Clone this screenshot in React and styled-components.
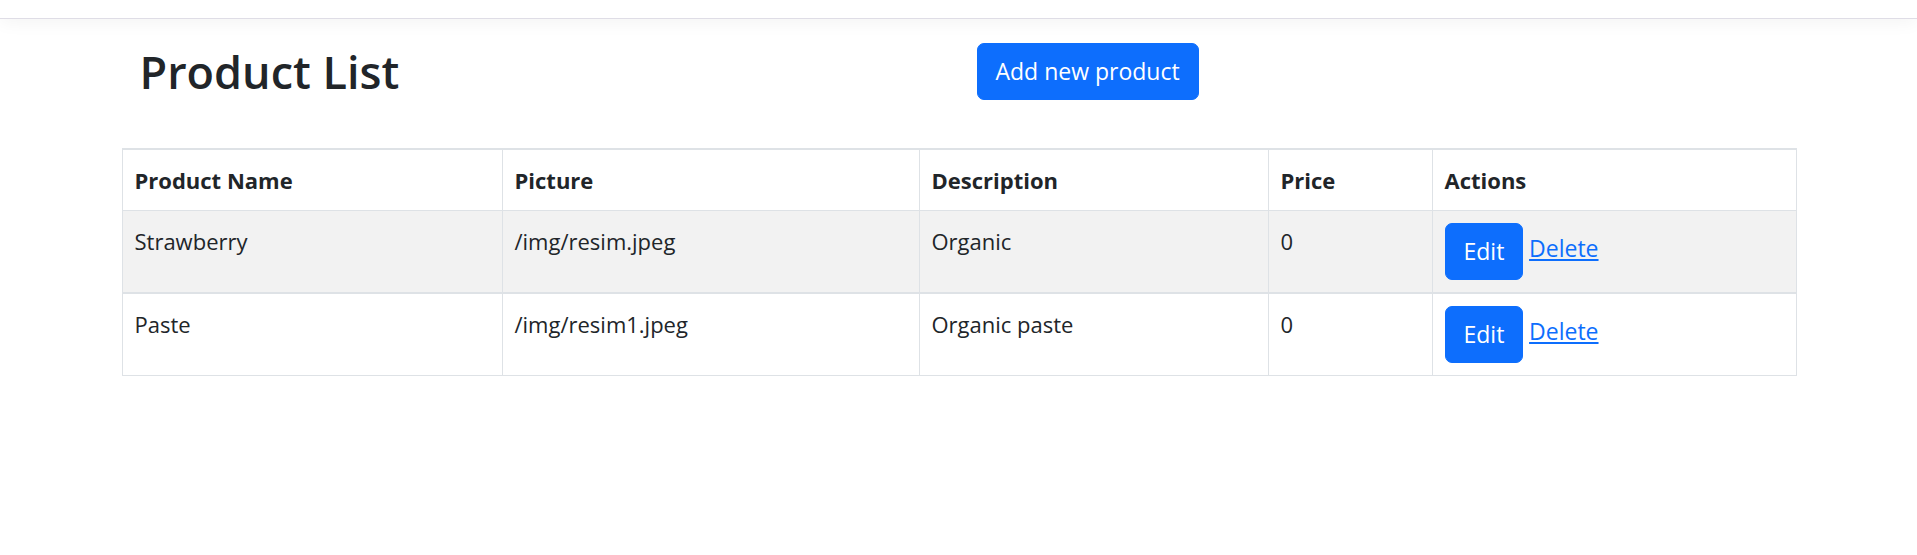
import styled, { createGlobalStyle } from "styled-components";

const products = [
  { name: "Strawberry", picture: "/img/resim.jpeg", description: "Organic", price: 0 },
  { name: "Paste", picture: "/img/resim1.jpeg", description: "Organic paste", price: 0 },
];

const columns = [
  { label: "Product Name", width: 380 },
  { label: "Picture", width: 417 },
  { label: "Description", width: 349 },
  { label: "Price", width: 164 },
  { label: "Actions", width: 364 },
];

export default function App() {
  return (
    <>
      <GlobalStyle />
      <Navbar />
      <Container>
        <HeaderRow>
          <HeaderCol>
            <Title>Product List</Title>
          </HeaderCol>
          <HeaderCol>
            <Button>Add new product</Button>
          </HeaderCol>
        </HeaderRow>
        <Table>
          <colgroup>
            {columns.map((c) => (
              <col key={c.label} style={{ width: c.width }} />
            ))}
          </colgroup>
          <thead>
            <tr>
              {columns.map((c) => (
                <Th key={c.label}>{c.label}</Th>
              ))}
            </tr>
          </thead>
          <tbody>
            {products.map((p, i) => (
              <Row key={p.name} $striped={i % 2 === 0} $thick={i === 0}>
                <Td>{p.name}</Td>
                <Td>{p.picture}</Td>
                <Td>{p.description}</Td>
                <Td>{p.price}</Td>
                <Td>
                  <Button>Edit</Button>{" "}
                  <DeleteLink href="#">Delete</DeleteLink>
                </Td>
              </Row>
            ))}
          </tbody>
        </Table>
      </Container>
    </>
  );
}

const GlobalStyle = createGlobalStyle`
  body {
    margin: 0;
    background: #fff;
    font-family: "Open Sans", "Noto Sans", sans-serif;
    color: #212529;
  }
`;

const Navbar = styled.nav`
  height: 18px;
  background: #fff;
  border-bottom: 1px solid #dfdde6;
  box-shadow: 0 3px 18px rgba(0, 0, 0, 0.05);
`;

const Container = styled.div`
  width: 1674px;
  margin: 0 auto;
`;

const HeaderRow = styled.div`
  display: grid;
  grid-template-columns: 1fr 1fr;
  align-items: start;
  margin-top: 24px;
`;

const HeaderCol = styled.div`
  padding: 0 18px;
`;

const Title = styled.h2`
  margin: 0;
  font-size: 45px;
  font-weight: 600;
  line-height: 57px;
  color: #212529;
`;

const Button = styled.button`
  display: inline-block;
  vertical-align: middle;
  font-family: inherit;
  font-size: 23px;
  line-height: 37px;
  padding: 9px 18px;
  color: #fff;
  background: #0d6efd;
  border: 1px solid #0d6efd;
  border-radius: 7px;
  cursor: pointer;
`;

const Table = styled.table`
  width: 1674px;
  margin-top: 48px;
  table-layout: fixed;
  border-collapse: collapse;
  border: 1px solid #dee2e6;
  border-top-width: 2px;
  font-size: 22px;
  line-height: 36px;
`;

const Th = styled.th`
  text-align: left;
  vertical-align: top;
  font-weight: 700;
  padding: 12px;
  border: 1px solid #dee2e6;
`;

const Row = styled.tr`
  background: ${({ $striped }) => ($striped ? "#f2f2f2" : "#fff")};
  border-bottom: ${({ $thick }) => ($thick ? "2px" : "1px")} solid #dee2e6;
`;

const Td = styled.td`
  vertical-align: top;
  padding: 12px;
  border: 1px solid #dee2e6;
  border-bottom-width: inherit;
`;

const DeleteLink = styled.a`
  color: #0d6efd;
  font-size: 23px;
  text-decoration: underline;
`;
